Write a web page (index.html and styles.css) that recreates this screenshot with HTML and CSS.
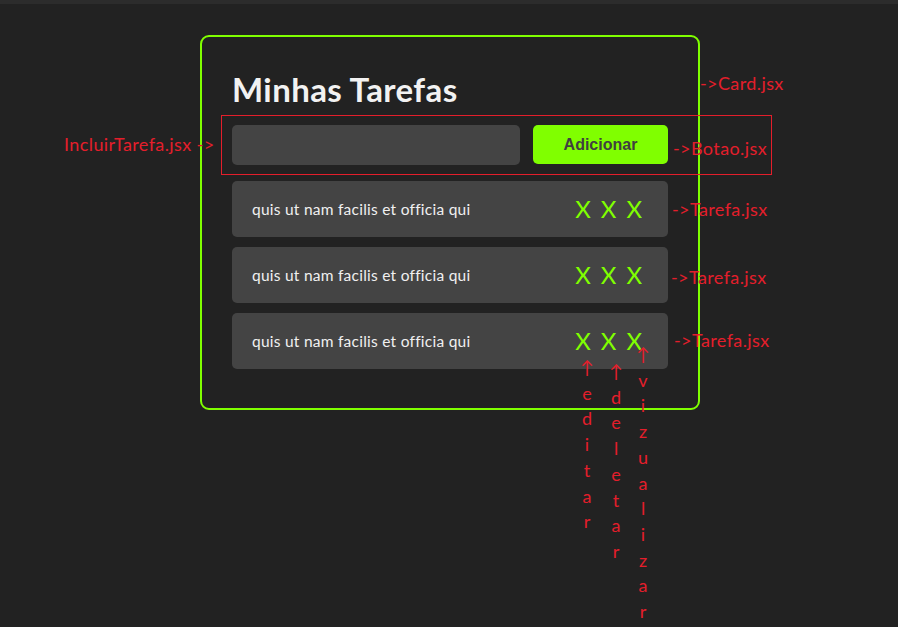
FILE: index.html
```html
<!DOCTYPE html>
<html lang="pt-BR">
<head>
<meta charset="utf-8">
<title>Minhas Tarefas</title>
<link rel="stylesheet" href="styles.css">
</head>
<body>
<div class="topbar"></div>
<div class="page">
  <section class="card">
    <h1 class="title">Minhas Tarefas</h1>
    <div class="add-row">
      <input class="add-input" type="text">
      <button class="add-btn">Adicionar</button>
    </div>
    <ul class="task-list">
      <li class="task">
        <span class="task-text">quis ut nam facilis et officia qui</span>
        <span class="task-actions"><span class="x">X</span><span class="x">X</span><span class="x">X</span></span>
      </li>
      <li class="task">
        <span class="task-text">quis ut nam facilis et officia qui</span>
        <span class="task-actions"><span class="x">X</span><span class="x">X</span><span class="x">X</span></span>
      </li>
      <li class="task">
        <span class="task-text">quis ut nam facilis et officia qui</span>
        <span class="task-actions"><span class="x">X</span><span class="x">X</span><span class="x">X</span></span>
      </li>
    </ul>
  </section>

  <div class="note-box"></div>
  <span class="note note-card">-&gt;Card.jsx</span>
  <span class="note note-incluir">IncluirTarefa.jsx -&gt;</span>
  <span class="note note-botao">-&gt;Botao.jsx</span>
  <span class="note note-t1">-&gt;Tarefa.jsx</span>
  <span class="note note-t2">-&gt;Tarefa.jsx</span>
  <span class="note note-t3">-&gt;Tarefa.jsx</span>
  <div class="vcol vcol-editar"><span>↑</span><span>e</span><span>d</span><span>i</span><span>t</span><span>a</span><span>r</span></div>
  <div class="vcol vcol-deletar"><span>↑</span><span>d</span><span>e</span><span>l</span><span>e</span><span>t</span><span>a</span><span>r</span></div>
  <div class="vcol vcol-viz"><span>↑</span><span>v</span><span>i</span><span>z</span><span>u</span><span>a</span><span>l</span><span>i</span><span>z</span><span>a</span><span>r</span></div>
</div>
</body>
</html>
```
FILE: styles.css
```css
html, body {
  margin: 0;
  padding: 0;
  background: #222222;
  height: 100%;
  overflow: hidden;
}
.topbar {
  height: 4px;
  background: #2c2c2c;
}
.page {
  position: relative;
  box-sizing: border-box;
  height: 623px;
  padding: 31px 0 0 200px;
  font-family: Lato, "Open Sans", sans-serif;
}
.card {
  box-sizing: border-box;
  width: 500px;
  padding: 32px 30px 39px;
  border: 2px solid #80ff00;
  border-radius: 9px;
  display: flex;
  flex-direction: column;
}
.title {
  margin: 0;
  font-family: Lato, sans-serif;
  font-weight: 700;
  font-size: 33px;
  letter-spacing: 0.4px;
  line-height: 40px;
  color: #f2f2f2;
}
.add-row {
  margin-top: 16px;
  display: flex;
  gap: 13px;
  align-items: flex-start;
}
.add-input {
  box-sizing: border-box;
  width: 288px;
  height: 40px;
  border: none;
  border-radius: 5px;
  background: #444444;
  padding: 0 10px;
  color: #eee;
  outline: none;
}
.add-btn {
  box-sizing: border-box;
  width: 135px;
  height: 39px;
  border: none;
  border-radius: 5px;
  background: #80ff00;
  color: #404040;
  font-family: "Liberation Sans", Arial, sans-serif;
  font-weight: 700;
  font-size: 16px;
  padding: 0;
}
.task-list {
  list-style: none;
  margin: 16px 0 0;
  padding: 0;
  display: flex;
  flex-direction: column;
  gap: 10px;
}
.task {
  height: 56px;
  box-sizing: border-box;
  padding: 0 26px 0 20px;
  background: #444444;
  border-radius: 5px;
  display: flex;
  align-items: center;
  justify-content: space-between;
}
.task-text {
  font-size: 15.5px;
  letter-spacing: 0.25px;
  color: #f0f0f0;
}
.task-actions {
  display: flex;
  gap: 10px;
}
.x {
  color: #80ff00;
  font-size: 24px;
  line-height: 24px;
}
.note-box {
  position: absolute;
  left: 221px;
  top: 111px;
  width: 549px;
  height: 58px;
  border: 1px solid #e41e2b;
}
.note {
  position: absolute;
  font-size: 18px;
  letter-spacing: 0.4px;
  line-height: 24px;
  color: #e41e2b;
  white-space: nowrap;
}
.note-card { left: 700px; top: 67px; }
.note-incluir { left: 64px; top: 128px; }
.note-botao { left: 673px; top: 132px; }
.note-t1 { left: 672px; top: 193px; }
.note-t2 { left: 671px; top: 261px; }
.note-t3 { left: 674px; top: 324px; }
.vcol {
  position: absolute;
  width: 16px;
  display: flex;
  flex-direction: column;
  align-items: center;
  font-size: 18px;
  line-height: 25.7px;
  color: #e41e2b;
}
.vcol-editar { left: 579px; top: 351px; }
.vcol-deletar { left: 608px; top: 355px; }
.vcol-viz { left: 635px; top: 338px; }
```
